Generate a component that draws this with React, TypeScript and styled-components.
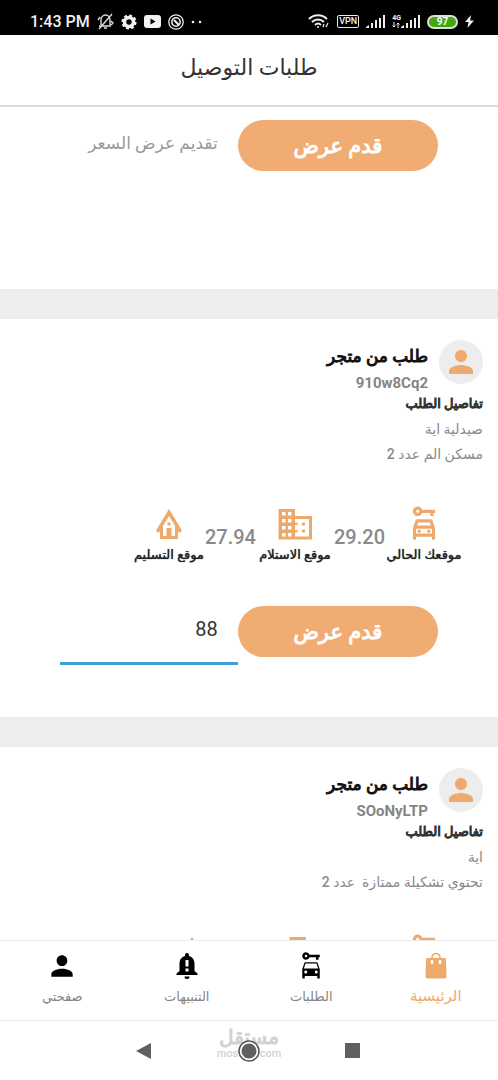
import React from "react";
import styled, { createGlobalStyle } from "styled-components";
import { MdCarRental, MdOutlineCarRental, MdPerson } from "react-icons/md";

const orange = "#f0ac72";
const iconOrange = "#eeaa6c";

const GlobalStyle = createGlobalStyle`
  * { box-sizing: border-box; }
  body {
    margin: 0;
    background: #fff;
    color: #222;
    font-family: Roboto, "DejaVu Sans", sans-serif;
  }
  button, input { font: inherit; border: 0; margin: 0; }
`;

const Screen = styled.div`
  display: flex;
  flex-direction: column;
  height: 100vh;
  overflow: hidden;
`;

const StatusBar = styled.div`
  display: flex;
  align-items: center;
  flex: none;
  gap: 7px;
  height: 35px;
  padding: 8px 24px 0 30px;
  background: #000;
  color: #f2f2f2;
  svg { flex: none; display: block; }
`;

const Clock = styled.span`
  font-size: 16px;
  line-height: 20px;
  font-weight: 500;
  white-space: nowrap;
`;

const Spacer = styled.span`
  flex: 1;
`;

const VpnTag = styled.span`
  border: 1px solid #e8e8e8;
  border-radius: 2px;
  padding: 0 1px;
  font-size: 9px;
  line-height: 11px;
  font-weight: 500;
`;

const Battery = styled.span`
  width: 31px;
  border: 2px solid #ddd;
  border-radius: 8px;
  background: #43a80f;
  color: #fff;
  text-align: center;
  font-size: 10px;
  line-height: 10px;
  font-weight: 700;
`;

const Header = styled.header`
  flex: none;
  height: 72px;
  border-bottom: 2px solid #dadada;
  text-align: center;
`;

const Title = styled.h1`
  margin: 0;
  font-size: 22px;
  line-height: 66px;
  font-weight: 400;
  color: #333;
`;

const Feed = styled.main`
  flex: 1;
  min-height: 0;
  overflow: hidden;
`;

const Card = styled.article`
  height: 428px;
  padding-top: 21px;
  border-top: 30px solid #ededed;
`;

const LeadingCard = styled.article`
  height: 182px;
  padding-top: 13px;
`;

const Customer = styled.div`
  display: flex;
  gap: 11px;
  padding: 0 15px;
`;

const Avatar = styled.span`
  display: flex;
  align-items: center;
  justify-content: center;
  width: 44px;
  height: 44px;
  border-radius: 50%;
  background: #ededed;
  color: ${iconOrange};
`;

const Name = styled.h2`
  margin: 0;
  font-size: 17px;
  line-height: 32px;
  font-weight: 400;
  -webkit-text-stroke: 1px currentColor;
  color: #111;
`;

const Code = styled.p`
  margin: 0;
  font-size: 15px;
  line-height: 22px;
  font-weight: 700;
  color: #858585;
  text-align: end;
`;

const Details = styled.div`
  padding: 0 15px;
  height: 111px;
`;

const DetailsTitle = styled.h3`
  margin: 0;
  font-size: 13px;
  line-height: 20px;
  font-weight: 400;
  -webkit-text-stroke: 1px currentColor;
  color: #333;
`;

const DetailsLine = styled.p`
  margin: 0;
  padding-top: 5px;
  font-size: 14px;
  line-height: 20px;
  color: #8a8a8a;
  white-space: pre;
  b { font-weight: 500; }
`;

const Route = styled.div`
  display: flex;
  padding: 0 35px;
  height: 101px;
`;

const Stop = styled.div<{ $width: number }>`
  display: flex;
  flex-direction: column;
  align-items: center;
  width: ${(p) => p.$width}px;
  color: ${iconOrange};
`;

const StopLabel = styled.span`
  font-size: 13px;
  line-height: 24px;
  text-shadow: 0 0 1px currentColor;
  color: #222;
  white-space: nowrap;
`;

const Distance = styled.span`
  padding-top: 20px;
  font-size: 20px;
  line-height: 24px;
  font-weight: 500;
  color: #8a8a8a;
`;

const OfferRow = styled.form`
  display: flex;
  align-items: flex-start;
  padding: 0 60px;
`;

const OfferButton = styled.button`
  width: 53%;
  height: 51px;
  padding: 0;
  border-radius: 26px;
  background: ${orange};
  color: #fff;
  font-size: 21px;
  -webkit-text-stroke: 1px currentColor;
`;

const PriceInput = styled.input<{ $active: boolean }>`
  width: 47%;
  height: 59px;
  padding: 0 20px 10px 0;
  border-bottom: 3px solid ${(p) => (p.$active ? "#429ed6" : "transparent")};
  border-radius: 0;
  outline: 0;
  background: transparent;
  color: #333;
  font-size: ${(p) => (p.$active ? 20 : 17)}px;
  &::placeholder { color: #999; opacity: 1; }
`;

const TabBar = styled.nav`
  display: flex;
  flex: none;
  height: 80px;
  border-top: 1px solid #ececec;
  background: #fff;
`;

const Tab = styled.a<{ $active?: boolean }>`
  flex: 1;
  display: flex;
  flex-direction: column;
  align-items: center;
  padding-top: 11px;
  text-decoration: none;
  font-size: ${(p) => (p.$active ? 15 : 13)}px;
  line-height: ${(p) => (p.$active ? 32 : 34)}px;
  color: ${(p) => (p.$active ? iconOrange : "#858585")};
`;

const TabIcon = styled.span`
  display: flex;
  align-items: center;
  justify-content: center;
  height: 28px;
`;

const SystemBar = styled.div`
  position: relative;
  display: flex;
  flex: none;
  align-items: center;
  justify-content: space-between;
  height: 60px;
  padding: 0 135px;
  border-top: 1px solid #ececec;
`;

const SystemButton = styled.button`
  display: flex;
  padding: 0;
  background: none;
  z-index: 1;
`;

const Watermark = styled.div`
  position: absolute;
  inset: 4px 0 0;
  text-align: center;
  color: #d2d2d2;
  font-size: 20px;
  line-height: 24px;
  -webkit-text-stroke: 1px currentColor;
  small {
    display: block;
    font-size: 11px;
    line-height: 10px;
    font-weight: 500;
    -webkit-text-stroke: 0;
  }
`;

const MutedBell = () => (
  <svg width="17" height="17" viewBox="0 0 17 17" fill="none" stroke="#ddd" strokeWidth="1.4">
    <path d="M2 13h12M4 12V7c0-3 2-5 4.500-5S13 4 13 7v5M7 15h3M15 1 2 16M1 7l2-3M14 8l2 2-2 2" />
  </svg>
);

const Gear = () => (
  <svg width="16" height="16" viewBox="0 0 16 16" fill="none" stroke="#f2f2f2">
    <circle cx="8" cy="8" r="4.500" strokeWidth="3.600" />
    <circle cx="8" cy="8" r="6.600" strokeWidth="2" strokeDasharray="2.900 2.280" />
  </svg>
);

const VideoBadge = () => (
  <svg width="17" height="13" viewBox="0 0 17 13">
    <rect width="17" height="13" rx="3" fill="#f2f2f2" />
    <path d="m6.500 3.500 5 3-5 3z" fill="#000" />
  </svg>
);

const RingBadge = () => (
  <svg width="16" height="16" viewBox="0 0 16 16" fill="none" stroke="#eee">
    <circle cx="8" cy="8" r="7.200" strokeWidth="1.300" />
    <circle cx="8" cy="8" r="4.200" strokeWidth="1.500" />
    <path d="m6 6 5 5" strokeWidth="2.200" />
  </svg>
);

const Dots = () => (
  <svg width="11" height="4" viewBox="0 0 11 4" fill="#eee">
    <circle cx="2" cy="2" r="1.300" />
    <circle cx="9" cy="2" r="1.300" />
  </svg>
);

const Wifi = () => (
  <svg width="22" height="15" viewBox="0 0 22 15" fill="none" stroke="#eee" strokeWidth="2">
    <path d="M1 5c5-5 13-5 18 0M4 8c3.500-3.500 8.500-3.500 12 0M7 11c2-2 4-2 6 0" />
    <circle cx="10" cy="13" r="1" fill="#eee" stroke="none" />
    <path d="m15 13 1-3M18 13l2-4" strokeWidth="1.300" />
  </svg>
);

const Signal = () => (
  <svg width="19" height="13" viewBox="0 0 19 13" fill="#eee">
    <path d="M0 13v-1l3-2v3zM5 8h2v5H5zM9 5h2v8H9zM13 3h2v10h-2zM17 0h2v13h-2z" />
  </svg>
);

const NetworkTag = styled.span`
  display: flex;
  align-items: center;
  font-size: 7px;
  line-height: 7px;
  font-weight: 700;
  text-align: center;
`;

const DataArrows = () => (
  <svg width="8" height="6" viewBox="0 0 8 6" fill="none" stroke="#eee">
    <path d="M2 0v5M0.500 3.500 2 5l1.500-1.500M6 6V1M4.500 2.500 6 1l1.500 1.500" />
  </svg>
);

const Bolt = () => (
  <svg width="9" height="13" viewBox="0 0 9 13" fill="#eee">
    <path d="M6 0 0 7h3.500L2.500 13 9 5.500H5.200z" />
  </svg>
);

const House = () => (
  <svg width="38" height="38" viewBox="0 0 38 38" fill={iconOrange}>
    <path
      fillRule="evenodd"
      d="M19 4 32 25.500 29.500 28 28 26v8H10v-8l-1.500 2L6 25.500zM19 11l-6 10v10h3.500v-8h5v8H25V21z"
    />
    <path d="M17.500 17.500h3v3h-3zM18 25h2v2h-2zM18 29h2v2h-2z" />
  </svg>
);

const Building = () => (
  <svg width="38" height="38" viewBox="0 0 38 38" fill={iconOrange}>
    <path
      fillRule="evenodd"
      d="M2.500 4h16.500v7H36v23.500H2.500zM6 7v3.500h3.500V7zM12 7v3.500h3.500V7zM6 14v3.500h3.500V14zM12 14v3.500h3.500V14zM6 21v3.500h3.500V21zM12 21v3.500h3.500V21zM6 28v3.500h3.500V28zM12 28v3.500h3.500V28zM19 14v3.500h2.500V20H19v5h2.500v2.500H19v4h14V14z"
    />
    <path d="M26 17.500h3v3h-3zM26 24.500h3v3h-3z" />
  </svg>
);

const Bag = () => (
  <svg width="28" height="28" viewBox="0 0 28 28">
    <path d="M10 7V5.500a4 4 0 0 1 8 0V7" fill="none" stroke={iconOrange} strokeWidth="1.700" />
    <path
      fill={iconOrange}
      d="M5.500 6h17a1.500 1.500 0 0 1 1.500 1.500L24.500 24a2.500 2.500 0 0 1-2.500 2.500H6A2.500 2.500 0 0 1 3.500 24L4 7.500A1.500 1.500 0 0 1 5.500 6z"
    />
    <ellipse cx="10" cy="10" rx="1.400" ry="2.200" fill="#fff" />
    <ellipse cx="18" cy="10" rx="1.400" ry="2.200" fill="#fff" />
  </svg>
);

const AlertBell = () => (
  <svg width="28" height="28" viewBox="0 0 28 28" fill="#000">
    <path
      fillRule="evenodd"
      d="M14 1a2 2 0 0 1 2 2v1c3.500 1 5.500 4 5.500 7.500v7.500l3 2.500V23h-21v-1.500l3-2.500v-7.500C6.500 8 8.500 5 12 4V3a2 2 0 0 1 2-2zM12.500 8v6.500h3V8zM12.500 16.500v3h3v-3z"
    />
    <path d="M11.500 24.500h5a2.500 2.500 0 0 1-5 0z" />
  </svg>
);

function Offer({ value = "" }: { value?: string }) {
  return (
    <OfferRow onSubmit={(e) => e.preventDefault()}>
      <OfferButton type="submit">قدم عرض</OfferButton>
      <PriceInput
        $active={value !== ""}
        defaultValue={value}
        placeholder="تقديم عرض السعر"
        aria-label="تقديم عرض السعر"
      />
    </OfferRow>
  );
}

interface OrderProps {
  code: string;
  store: string;
  item: string;
  toPickup: string;
  toDropoff: string;
  price?: string;
}

function Order({ code, store, item, toPickup, toDropoff, price }: OrderProps) {
  return (
    <Card>
      <Customer>
        <Avatar>
          <MdPerson size={36} />
        </Avatar>
        <div>
          <Name>طلب من متجر</Name>
          <Code dir="ltr">{code}</Code>
        </div>
      </Customer>
      <Details>
        <DetailsTitle>تفاصيل الطلب</DetailsTitle>
        <DetailsLine>{store}</DetailsLine>
        <DetailsLine>
          {item} <b>2</b>
        </DetailsLine>
      </Details>
      <Route>
        <Stop $width={78}>
          <MdOutlineCarRental size={38} />
          <StopLabel>موقعك الحالي</StopLabel>
        </Stop>
        <Distance>{toPickup}</Distance>
        <Stop $width={78}>
          <Building />
          <StopLabel>موقع الاستلام</StopLabel>
        </Stop>
        <Distance>{toDropoff}</Distance>
        <Stop $width={72}>
          <House />
          <StopLabel>موقع التسليم</StopLabel>
        </Stop>
      </Route>
      <Offer value={price} />
    </Card>
  );
}

export default function App() {
  return (
    <Screen>
      <GlobalStyle />
      <StatusBar>
        <Clock>1:43 PM</Clock>
        <MutedBell />
        <Gear />
        <VideoBadge />
        <RingBadge />
        <Dots />
        <Spacer />
        <Wifi />
        <VpnTag>VPN</VpnTag>
        <Signal />
        <NetworkTag>
          <span>
            4G
            <DataArrows />
          </span>
          <Signal />
        </NetworkTag>
        <Battery>97</Battery>
        <Bolt />
      </StatusBar>
      <Header dir="rtl">
        <Title>طلبات التوصيل</Title>
      </Header>
      <Feed dir="rtl">
        <LeadingCard>
          <Offer />
        </LeadingCard>
        <Order
          code="910w8Cq2"
          store="صيدلية اية"
          item="مسكن الم عدد"
          toPickup="29.20"
          toDropoff="27.94"
          price="88"
        />
        <Order
          code="SOoNyLTP"
          store="اية"
          item="تحتوي تشكيلة ممتازة  عدد"
          toPickup="9.20"
          toDropoff="7.94"
        />
      </Feed>
      <TabBar dir="rtl">
        <Tab href="#home" $active>
          <TabIcon>
            <Bag />
          </TabIcon>
          الرئيسية
        </Tab>
        <Tab href="#orders">
          <TabIcon>
            <MdCarRental size={30} color="#000" />
          </TabIcon>
          الطلبات
        </Tab>
        <Tab href="#alerts">
          <TabIcon>
            <AlertBell />
          </TabIcon>
          التنبيهات
        </Tab>
        <Tab href="#profile">
          <TabIcon>
            <MdPerson size={32} color="#000" />
          </TabIcon>
          صفحتي
        </Tab>
      </TabBar>
      <SystemBar>
        <Watermark>
          مستقل
          <small>mostaql.com</small>
        </Watermark>
        <SystemButton aria-label="Back">
          <svg width="18" height="18" viewBox="0 0 18 18" fill="#606060">
            <path d="M1 9 16 1v16z" />
          </svg>
        </SystemButton>
        <SystemButton aria-label="Home">
          <svg width="24" height="24" viewBox="0 0 24 24">
            <circle cx="12" cy="12" r="10" fill="#fff" stroke="#555" strokeWidth="1.500" />
            <circle cx="12" cy="12" r="7.500" fill="#606060" />
          </svg>
        </SystemButton>
        <SystemButton aria-label="Recents">
          <svg width="18" height="18" viewBox="0 0 18 18" fill="#606060">
            <path d="M0 1h15v15H0z" />
          </svg>
        </SystemButton>
      </SystemBar>
    </Screen>
  );
}
